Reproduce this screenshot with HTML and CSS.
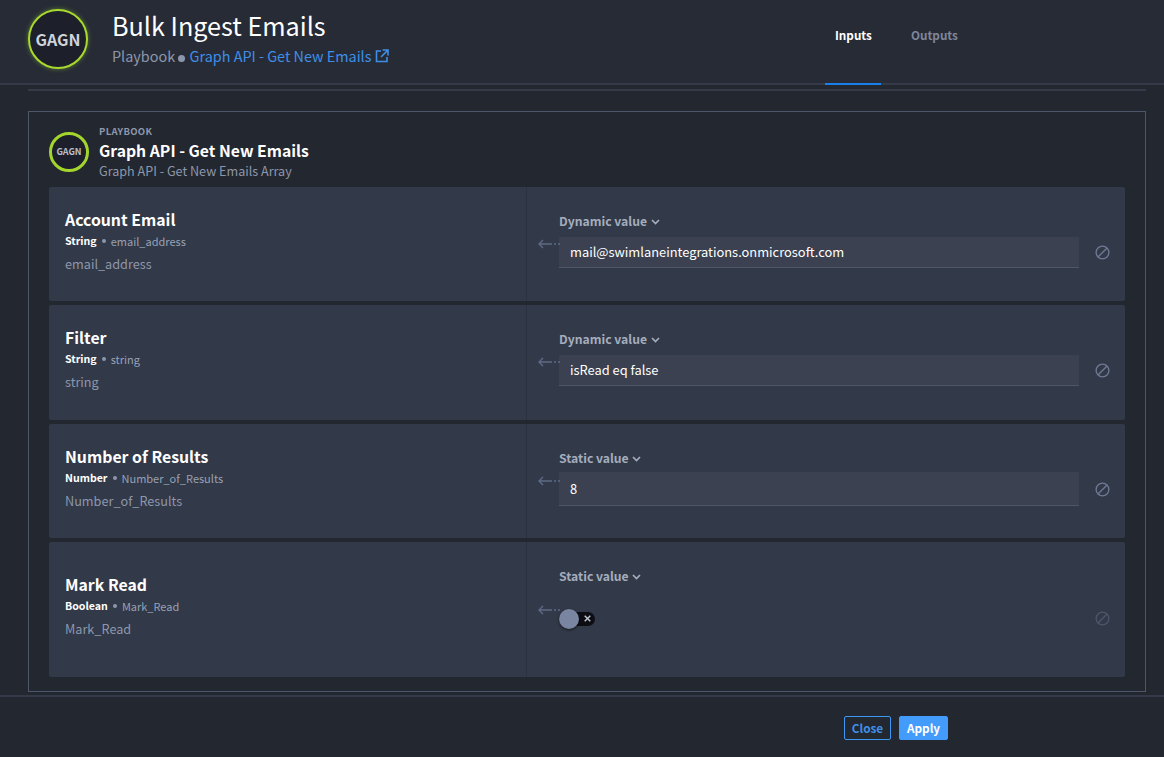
FILE: index.html
```html
<!DOCTYPE html>
<html>
<head>
<meta charset="utf-8">
<title>Bulk Ingest Emails</title>
<link rel="stylesheet" href="styles.css">
</head>
<body>
<header class="top">
  <div class="badge">GAGN</div>
  <div class="top-text">
    <h1>Bulk Ingest Emails</h1>
    <p class="crumb">Playbook <span class="crumb-dot"></span> <a href="#">Graph API - Get New Emails</a> <svg class="ext" width="14" height="14" viewBox="0 0 14 14" fill="none" stroke="#3f8fe8" stroke-width="1.6"><path d="M6 2H1.5v10.5H12V8"/><path d="M7.5 1h5.5v5.5M13 1L6 8"/></svg></p>
  </div>
  <nav class="tabs">
    <a class="tab active" href="#">Inputs</a>
    <a class="tab" href="#">Outputs</a>
  </nav>
</header>
<main class="content">
  <div class="rule"></div>
  <section class="panel">
    <div class="panel-head">
      <div class="badge small">GAGN</div>
      <div>
        <div class="eyebrow">PLAYBOOK</div>
        <div class="panel-title">Graph API - Get New Emails</div>
        <div class="panel-sub">Graph API - Get New Emails Array</div>
      </div>
    </div>

    <div class="row h1">
      <div class="row-left">
        <div class="name">Account Email</div>
        <div class="meta"><b>String</b><span class="dot"></span>email_address</div>
        <div class="desc">email_address</div>
      </div>
      <div class="row-right">
        <div class="mode">Dynamic value <svg class="chev" width="9" height="6" viewBox="0 0 9 6" fill="none" stroke="#a5adbd" stroke-width="1.7"><path d="M1 1l3.5 3.5L8 1"/></svg></div>
        <div class="field-line">
          <svg class="arrow" width="22" height="10" viewBox="0 0 22 10" fill="none" stroke="#5e6a85" stroke-width="1.4"><path d="M5 1L1 5l4 4M1 5h13M16 5h2M20 5h2"/></svg>
          <div class="field">mail@swimlaneintegrations.onmicrosoft.com</div>
          <svg class="ban" width="15" height="15" viewBox="0 0 16 16" fill="none" stroke="#6f7b96" stroke-width="1.4"><circle cx="8" cy="8" r="6.8"/><path d="M3.4 12.6l9.2-9.2"/></svg>
        </div>
      </div>
    </div>

    <div class="row h2">
      <div class="row-left">
        <div class="name">Filter</div>
        <div class="meta"><b>String</b><span class="dot"></span>string</div>
        <div class="desc">string</div>
      </div>
      <div class="row-right">
        <div class="mode">Dynamic value <svg class="chev" width="9" height="6" viewBox="0 0 9 6" fill="none" stroke="#a5adbd" stroke-width="1.7"><path d="M1 1l3.5 3.5L8 1"/></svg></div>
        <div class="field-line">
          <svg class="arrow" width="22" height="10" viewBox="0 0 22 10" fill="none" stroke="#5e6a85" stroke-width="1.4"><path d="M5 1L1 5l4 4M1 5h13M16 5h2M20 5h2"/></svg>
          <div class="field">isRead eq false</div>
          <svg class="ban" width="15" height="15" viewBox="0 0 16 16" fill="none" stroke="#6f7b96" stroke-width="1.4"><circle cx="8" cy="8" r="6.8"/><path d="M3.4 12.6l9.2-9.2"/></svg>
        </div>
      </div>
    </div>

    <div class="row h1">
      <div class="row-left">
        <div class="name">Number of Results</div>
        <div class="meta"><b>Number</b><span class="dot"></span>Number_of_Results</div>
        <div class="desc">Number_of_Results</div>
      </div>
      <div class="row-right static">
        <div class="mode">Static value <svg class="chev" width="9" height="6" viewBox="0 0 9 6" fill="none" stroke="#a5adbd" stroke-width="1.7"><path d="M1 1l3.5 3.5L8 1"/></svg></div>
        <div class="field-line">
          <svg class="arrow" width="22" height="10" viewBox="0 0 22 10" fill="none" stroke="#5e6a85" stroke-width="1.4"><path d="M5 1L1 5l4 4M1 5h13M16 5h2M20 5h2"/></svg>
          <div class="field tall">8</div>
          <svg class="ban" width="15" height="15" viewBox="0 0 16 16" fill="none" stroke="#6f7b96" stroke-width="1.4"><circle cx="8" cy="8" r="6.8"/><path d="M3.4 12.6l9.2-9.2"/></svg>
        </div>
      </div>
    </div>

    <div class="row h4">
      <div class="row-left">
        <div class="name">Mark Read</div>
        <div class="meta"><b>Boolean</b><span class="dot"></span>Mark_Read</div>
        <div class="desc">Mark_Read</div>
      </div>
      <div class="row-right static">
        <div class="mode">Static value <svg class="chev" width="9" height="6" viewBox="0 0 9 6" fill="none" stroke="#a5adbd" stroke-width="1.7"><path d="M1 1l3.5 3.5L8 1"/></svg></div>
        <div class="field-line toggle-line">
          <svg class="arrow" width="22" height="10" viewBox="0 0 22 10" fill="none" stroke="#5e6a85" stroke-width="1.4"><path d="M5 1L1 5l4 4M1 5h13M16 5h2M20 5h2"/></svg>
          <div class="toggle"><span class="knob"></span>
            <svg class="toggle-x" width="7" height="7" viewBox="0 0 7 7" fill="none" stroke="#c3c8d2" stroke-width="1.4"><path d="M.7.7l5.6 5.6M6.3.7L.7 6.3"/></svg>
          </div>
          <svg class="ban dim" width="15" height="15" viewBox="0 0 16 16" fill="none" stroke="#6f7b96" stroke-width="1.4"><circle cx="8" cy="8" r="6.8"/><path d="M3.4 12.6l9.2-9.2"/></svg>
        </div>
      </div>
    </div>
  </section>
</main>
<footer class="bottom">
  <button class="btn ghost">Close</button>
  <button class="btn solid">Apply</button>
</footer>
</body>
</html>
```

FILE: styles.css
```css
*{box-sizing:border-box;}
html,body{height:100%;}
body{margin:0; width:1164px; height:757px; overflow:hidden; background-color:#23272f; color:#fff; font-family:"Noto Sans CJK SC","Noto Sans",sans-serif; display:flex; flex-direction:column;}

.top{height:85px; flex:none; display:flex; align-items:flex-start; padding:9px 0 0 28px; background-color:#262b36; border-bottom:2px solid #343a48; position:relative;}
.badge{width:60px; height:60px; flex:none; border-radius:50%; background-color:#1d202b; border:2px solid #a8d92e; box-shadow:0 0 5px rgba(168,217,46,.45); color:#cfd3da; font-size:16px; font-weight:700; line-height:56px; text-align:center;}
.badge.small{width:40px; height:40px; border:3px solid #a4d52c; box-shadow:none; font-size:9px; line-height:34px; color:#b9bec8;}
.top-text{margin-left:24px;}
h1{margin:0; font-size:25.2px; font-weight:400; line-height:33px; color:#fff;}
.crumb{margin:3px 0 0; font-size:14.4px; line-height:22px; color:#8d97ac; white-space:pre;}
.crumb a{color:#3f8fe8; text-decoration:none;}
.crumb-dot{display:inline-block; width:7px; height:7px; border-radius:50%; background-color:#8d97ac; margin:0 1px 0 0; vertical-align:0;}
.ext{vertical-align:-1px;}
.tabs{position:absolute; left:825px; top:0; height:85px; display:flex;}
.tab{height:85px; padding-top:25px; font-size:11.7px; font-weight:700; line-height:20px; color:#7d869b; text-decoration:none; padding-left:10px; padding-right:10px; margin-right:20px;}
.tab.active{color:#fff; border-bottom:2px solid #1a7fe8; width:56px;}

.content{flex:1; min-height:0; padding:4px 18px 0 28px;}
.rule{height:2px; background-color:#343a48;}
.panel{margin-top:20px; height:581px; border:1px solid #4e5769; padding:0 20px;}
.panel-head{height:75px; padding-top:12px; display:flex; gap:10px;}
.panel-head .badge{margin-top:8px;}
.eyebrow{font-size:9.5px; font-weight:700; line-height:14px; color:#8d97ac; letter-spacing:.3px;}
.panel-title{font-size:15.75px; font-weight:700; line-height:24px; margin-top:1px;}
.panel-sub{font-size:12.6px; line-height:16px; color:#8d97ac;}

.row{display:flex; background-color:#323948; border-radius:2px; margin-bottom:4px;}
.h1{height:114px;}
.h2{height:115px;}
.h4{height:135px; margin-bottom:0;}
.row-left{width:478px; flex:none; padding:0 16px 8px; border-right:1px solid #2b3140; display:flex; flex-direction:column; justify-content:center;}
.name{font-size:15.84px; font-weight:700; line-height:24px; color:#fff;}
.meta{font-size:11px; line-height:16px; margin-top:1px; color:#98a1b5; display:flex; align-items:center;}
.meta b{color:#fff; font-size:10.6px; font-weight:700;}
.dot{width:4px; height:4px; border-radius:50%; background-color:#8d97ac; margin:0 5px;}
.desc{font-size:12.7px; line-height:18px; margin-top:6px; color:#8d97ac;}

.row-right{flex:1; padding:24px 0 0 32px;}
.mode{font-size:12.2px; font-weight:700; line-height:20px; color:#a5adbd;}
.chev{margin-left:1px; vertical-align:1px;}
.field-line{position:relative; display:flex; align-items:center; margin-top:6px;}
.static .field-line{margin-top:4px;}
.arrow{position:absolute; left:-21px; top:50%; margin-top:-14px;}
.static .arrow{margin-top:-13px;}
.field{width:520px; height:31px; padding-left:11px; background-color:#3b4150; border-bottom:1px solid #4e5769; font-size:12.87px; line-height:30px; color:#fff;}
.field.tall{height:34px; line-height:33px;}
.ban{margin-left:16px; margin-bottom:1px;}
.static .ban{margin-bottom:0;}
.static .ban.dim{opacity:.45; position:absolute; left:536px; top:8px; margin:0;}
.toggle-line{height:30px;}
.static .toggle-line{margin-top:17px;}
.toggle-line .arrow{top:0; margin-top:2px;}
.toggle{position:relative; width:36px; height:14px; margin-top:1px; border-radius:7px; background-color:#0c0e13;}
.knob{position:absolute; left:0; top:-3px; width:20px; height:20px; border-radius:50%; background-color:#7a85a2; box-shadow:0 1px 3px rgba(0,0,0,.6);}
.toggle-x{position:absolute; right:4px; top:3.5px;}

.bottom{height:62px; flex:none; border-top:2px solid #343a48; background-color:#23272f; display:flex; justify-content:flex-end; gap:8px; padding:19px 216px 0 0;}
.btn{height:24px; padding:0; border-radius:2px; font-family:inherit; font-size:11.8px; font-weight:700; line-height:20px;}
.ghost{width:47px; background:none; border:1px solid #3f97f5; color:#3f8fe8;}
.solid{width:49px; background-color:#439bfb; border:1px solid #439bfb; color:#fff;}
```
